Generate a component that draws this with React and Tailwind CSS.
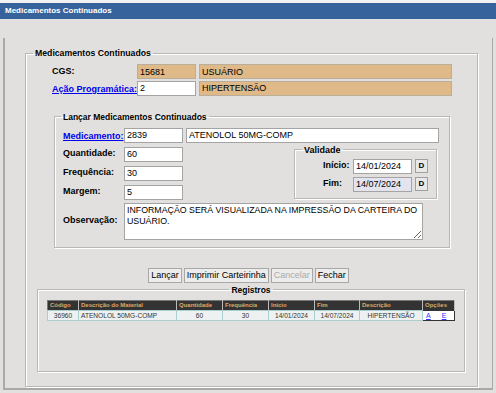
import React from "react";

const inp = "h-[15px] border border-[#a4a4a4] px-[2px] text-[9px] leading-[13px] outline-none font-['Liberation_Sans',Arial,sans-serif] text-black";
const white = inp + " bg-white";
const tan = inp + " bg-[#dfb988] border-[#b9ad9c]";
const btn = "h-[15px] px-[2px] border border-[#a8a8a8] bg-[#ececec] text-[9px] leading-[13px] font-['Liberation_Sans',Arial,sans-serif]";
const fs = "border border-[#b8b8b8] shadow-[inset_1px_1px_0_#fff,1px_1px_0_#fff]";
const lbl = "font-bold text-[9px] whitespace-nowrap";
const link = "font-bold text-[9px] whitespace-nowrap text-[#0000ee] underline";
const td = "border border-[#a9d0cf] h-[10px] leading-[9px] text-center";

export default function App() {
  const cols = [
    ["Código", 31],
    ["Descrição do Material", 98],
    ["Quantidade", 46],
    ["Frequência", 46],
    ["Início", 46],
    ["Fim", 45],
    ["Descrição", 63],
    ["Opções", 32],
  ];
  return (
    <div className="w-[496px] h-[393px] bg-[#e1e0de] font-['Liberation_Sans',Arial,sans-serif] text-[11px] text-black overflow-hidden">
      <div className="h-[3px] bg-[#f2f2f2]" />
      <div className="h-[16px] bg-[#36639c] text-white font-bold pl-[5px] leading-[16px] text-[8px]">Medicamentos Continuados</div>
      <div className="mt-[19px] ml-[3px] w-[490px] h-[352px] border-l-2 border-r border-b-2 border-[#a9a9a9] pl-[20px] pt-[10px]">
        <fieldset className={`${fs} w-[453px] h-[339px]`}>
          <legend className="ml-[7px] px-[2px] font-bold leading-[10px] text-[8.7px]">Medicamentos Continuados</legend>
          <div className="pl-[26px] pt-[6px] flex flex-col gap-[1px]">
            <div className="flex items-center">
              <span className={`w-[85px] ${lbl}`}>CGS:</span>
              <input readOnly value="15681" className={`${tan} w-[59px]`} />
              <input readOnly value="USUÁRIO" className={`${tan} w-[253px] ml-[3px]`} />
            </div>
            <div className="flex items-center">
              <span className="w-[85px]"><a className={link}>Ação Programática:</a></span>
              <input readOnly value="2" className={`${white} w-[59px]`} />
              <input readOnly value="HIPERTENSÃO" className={`${tan} w-[253px] ml-[3px]`} />
            </div>
          </div>

          <fieldset className={`${fs} ml-[28px] mt-[15px] w-[396px] h-[136px]`}>
            <legend className="ml-[6px] px-[2px] font-bold leading-[10px] text-[8.5px]">Lançar Medicamentos Continuados</legend>
            <div className="pl-[8px] pt-[6px]">
              <div className="flex items-center h-[15px]">
                <span className="w-[61px]"><a className={link}>Medicamento:</a></span>
                <input readOnly value="2839" className={`${white} w-[59px]`} />
                <input readOnly value="ATENOLOL 50MG-COMP" className={`${white} w-[253px] ml-[3px]`} />
              </div>
              <div className="flex">
                <div className="flex flex-col gap-[4px] pt-[4px]">
                  <div className="flex items-center">
                    <span className={`w-[61px] ${lbl}`}>Quantidade:</span>
                    <input readOnly value="60" className={`${white} w-[59px]`} />
                  </div>
                  <div className="flex items-center">
                    <span className={`w-[61px] ${lbl}`}>Frequência:</span>
                    <input readOnly value="30" className={`${white} w-[59px]`} />
                  </div>
                  <div className="flex items-center">
                    <span className={`w-[61px] ${lbl}`}>Margem:</span>
                    <input readOnly value="5" className={`${white} w-[59px]`} />
                  </div>
                </div>
                <fieldset className={`${fs} ml-[111px] mt-[2px] w-[143px] h-[54px]`}>
                  <legend className="ml-[7px] px-[2px] font-bold leading-[10px] text-[9px]">Validade</legend>
                  <div className="pl-[28px] pt-[4px] flex flex-col gap-[3px]">
                    <div className="flex items-center">
                      <span className={`w-[30px] ${lbl}`}>Início:</span>
                      <input readOnly value="14/01/2024" className={`${white} w-[59px]`} />
                      <button className="ml-[3px] w-[13px] h-[14px] border border-[#a0a0a0] bg-[#e8e8e8] text-[8px] font-bold leading-[12px]">D</button>
                    </div>
                    <div className="flex items-center">
                      <span className={`w-[30px] ${lbl}`}>Fim:</span>
                      <input readOnly value="14/07/2024" className={`${inp} bg-[#e4e4ee] w-[59px]`} />
                      <button className="ml-[3px] w-[13px] h-[14px] border border-[#a0a0a0] bg-[#e8e8e8] text-[8px] font-bold leading-[12px]">D</button>
                    </div>
                  </div>
                </fieldset>
              </div>
              <div className="flex items-center mt-[3px]">
                <span className={`w-[61px] ${lbl}`}>Observação:</span>
                <textarea
                  readOnly
                  value="INFORMAÇÃO SERÁ VISUALIZADA NA IMPRESSÃO DA CARTEIRA DO USUÁRIO."
                  className="w-[299px] h-[37px] bg-white border border-[#a4a4a4] px-[2px] py-[1px] text-[8.8px] leading-[11px] outline-none font-['Liberation_Sans',Arial,sans-serif]"
                />
              </div>
            </div>
          </fieldset>

          <div className="flex justify-center gap-[2px] mt-[20px] pr-[6px]">
            <button className={btn}>Lançar</button>
            <button className={btn}>Imprimir Carteirinha</button>
            <button className={`${btn} text-[#a9a9a9]`}>Cancelar</button>
            <button className={btn}>Fechar</button>
          </div>

          <fieldset className={`${fs} ml-[11px] mt-[2px] w-[428px] h-[87px]`}>
            <legend className="mx-auto px-[2px] font-bold leading-[10px] text-[8.5px]">Registros</legend>
            <table className="ml-[9px] mt-[5px] border-collapse border border-[#777] table-fixed w-[408px]">
              <thead>
                <tr className="bg-[#333333] text-[#dcaa68]">
                  {cols.map(([c, w]) => (
                    <th key={c} style={{ width: w }} className="h-[10px] leading-[9px] px-[2px] text-left border-r border-[#bbbbbb] font-bold text-[6px] whitespace-nowrap overflow-hidden">{c}</th>
                  ))}
                </tr>
              </thead>
              <tbody>
                <tr className="bg-[#eef1f1] text-[#333] text-[6.6px]">
                  <td className={td}>36960</td>
                  <td className={`${td} !text-left px-[2px]`}>ATENOLOL 50MG-COMP</td>
                  <td className={td}>60</td>
                  <td className={td}>30</td>
                  <td className={td}>14/01/2024</td>
                  <td className={td}>14/07/2024</td>
                  <td className={td}>HIPERTENSÃO</td>
                  <td className="border border-[#333] bg-white leading-[9px] px-[2px] text-[#3333ff] text-[7px]">
                    <span className="underline ml-[1px]">A</span>
                    <span className="underline ml-[11px]">E</span>
                  </td>
                </tr>
              </tbody>
            </table>
          </fieldset>
        </fieldset>
      </div>
    </div>
  );
}
